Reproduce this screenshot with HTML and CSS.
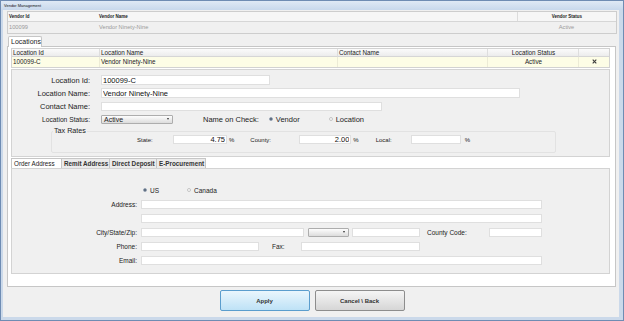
FILE: index.html
```html
<!DOCTYPE html>
<html lang="en">
<head>
    <meta charset="UTF-8">
    <title>Vendor Management</title>
    <link rel="stylesheet" href="styles.css">
</head>
<body>
    <div class="window">
        <div class="titlebar">Vendor Management</div>
        <div class="frame">
            <div class="vendor">
                <div class="vrow vhead">
                    <span class="vid">Vendor Id</span>
                    <span>Vendor Name</span>
                    <span class="vstatus">Vendor Status</span>
                </div>
                <div class="vrow vdata">
                    <span class="vid">100099</span>
                    <span>Vendor Ninety-Nine</span>
                    <span class="vstatus">Active</span>
                </div>
            </div>

            <div class="loc-tab">Locations</div>
            <div class="loc-panel">
                <div class="grid">
                    <div class="gh">Location Id</div>
                    <div class="gh">Location Name</div>
                    <div class="gh">Contact Name</div>
                    <div class="gh center">Location Status</div>
                    <div class="gh"></div>
                    <div class="gd">100099-C</div>
                    <div class="gd">Vendor Ninety-Nine</div>
                    <div class="gd"></div>
                    <div class="gd center">Active</div>
                    <div class="gd center">
                        <svg class="del" width="5" height="5" viewBox="0 0 5 5">
                            <path d="M0.7 0.7 L4.3 4.3 M4.3 0.7 L0.7 4.3" stroke="#3a3a3a" stroke-width="1.1"/>
                        </svg>
                    </div>
                </div>

                <div class="form-panel">
                    <div class="frow">
                        <label class="lbl">Location Id:</label>
                        <input class="in w-id" value="100099-C">
                    </div>
                    <div class="frow">
                        <label class="lbl">Location Name:</label>
                        <input class="in w-name" value="Vendor Ninety-Nine">
                    </div>
                    <div class="frow">
                        <label class="lbl">Contact Name:</label>
                        <input class="in w-contact" value="">
                    </div>
                    <div class="frow">
                        <label class="lbl small">Location Status:</label>
                        <div class="select w-status">Active<span class="arrow"></span></div>
                        <span class="check-lbl">Name on Check:</span>
                        <span class="radio on"></span><span class="rtext">Vendor</span>
                        <span class="radio gap-loc"></span><span class="rtext">Location</span>
                    </div>
                    <fieldset class="tax">
                        <legend>Tax Rates</legend>
                        <div class="trow">
                            <span class="tl t-state">State:</span>
                            <input class="in num w-state" value="4.75">
                            <span class="pct">%</span>
                            <span class="tl t-county">County:</span>
                            <input class="in num w-county" value="2.00">
                            <span class="pct">%</span>
                            <span class="tl t-local">Local:</span>
                            <input class="in num w-local" value="">
                            <span class="pct wide">%</span>
                        </div>
                    </fieldset>
                </div>

                <div class="addr-tabs">
                    <span class="atab on t1">Order Address</span>
                    <span class="atab t2">Remit Address</span>
                    <span class="atab t3">Direct Deposit</span>
                    <span class="atab t4 last">E-Procurement</span>
                </div>
                <div class="addr-panel">
                    <div class="arow">
                        <span class="lbl"></span>
                        <span class="radio on"></span><span class="rtext">US</span>
                        <span class="radio gap-ca"></span><span class="rtext">Canada</span>
                    </div>
                    <div class="arow">
                        <span class="lbl">Address:</span>
                        <input class="in a w-addr">
                    </div>
                    <div class="arow">
                        <span class="lbl"></span>
                        <input class="in a w-addr">
                    </div>
                    <div class="arow">
                        <span class="lbl">City/State/Zip:</span>
                        <input class="in a w-city">
                        <div class="select a w-st"><span class="arrow"></span></div>
                        <input class="in a w-zip">
                        <span class="al w-cclbl">County Code:</span>
                        <input class="in a w-cc">
                    </div>
                    <div class="arow">
                        <span class="lbl">Phone:</span>
                        <input class="in a w-phone">
                        <span class="al w-faxlbl">Fax:</span>
                        <input class="in a w-fax">
                    </div>
                    <div class="arow">
                        <span class="lbl">Email:</span>
                        <input class="in a w-addr">
                    </div>
                </div>
            </div>

            <div class="buttons">
                <button class="btn apply">Apply</button>
                <button class="btn cancel">Cancel \ Back</button>
            </div>
        </div>
    </div>
</body>
</html>
```

FILE: styles.css
```css
* {
    box-sizing: border-box;
}
body {
    margin: 0;
    font-family: "Liberation Sans", Arial, sans-serif;
    color: #222;
}
.window {
    width: 624px;
    height: 321px;
    border: 1px solid #6f8cb3;
    background: #f0f0f0;
    display: flex;
    flex-direction: column;
}
.titlebar {
    height: 9px;
    line-height: 9px;
    padding-left: 3px;
    font-size: 4px;
    color: #111;
    background: linear-gradient(#dfe9f5, #c8d8ec);
}
.frame {
    flex: 1;
    display: flex;
    flex-direction: column;
    border: solid #cbd9ea;
    border-width: 0 4px 3px 2px;
    padding: 1px 2px 0 4px;
}

/* vendor header */
.vendor {
    height: 23px;
    border: 1px solid #cdcdcd;
    background: #f0f0f0;
}
.vrow {
    display: grid;
    grid-template-columns: 91px 418px 1fr;
}
.vhead {
    height: 10px;
    line-height: 9px;
    font-size: 4.5px;
    font-weight: bold;
    background: #f6f6f6;
    border-bottom: 1px solid #d6d6d6;
}
.vhead .vstatus {
    border-left: 1px solid #dcdcdc;
}
.vdata {
    height: 11px;
    line-height: 11px;
    font-size: 5.7px;
    color: #9a9a9a;
}
.vid {
    padding-left: 1px;
}
.vstatus {
    text-align: center;
}

/* locations */
.loc-tab {
    position: relative;
    z-index: 1;
    margin: 2px 0 -1px 1px;
    width: 34px;
    height: 11px;
    background: #fff;
    border: 1px solid #c6c6c6;
    border-bottom: none;
    border-radius: 2px 2px 0 0;
    padding-left: 2px;
    font-size: 7px;
    line-height: 10px;
}
.loc-panel {
    height: 241px;
    margin-right: 1px;
    background: #fff;
    border: 1px solid #c6c6c6;
    padding: 1px 5px 12px 3px;
    display: flex;
    flex-direction: column;
}
.grid {
    display: grid;
    grid-template-columns: 88px 238px 150px 91px 1fr;
    border: 1px solid #d2d2d2;
    font-size: 6.3px;
}
.gh {
    height: 8px;
    line-height: 7px;
    padding-left: 1px;
    background: linear-gradient(#fbfbfb, #ececec);
    border-bottom: 1px solid #d6d6d6;
    border-right: 1px solid #dedede;
}
.gd {
    height: 10px;
    line-height: 10px;
    padding-left: 1px;
    background: #fdfde6;
    border-right: 1px solid #ecebd6;
}
.gh:nth-child(5), .gd:nth-child(10) {
    border-right: none;
}
.center {
    text-align: center;
}
.del {
    vertical-align: middle;
    margin-top: -1px;
}

/* location form */
.form-panel {
    margin-top: 1px;
    height: 88px;
    background: #f0f0f0;
    border: 1px solid #d3d3d3;
    padding-top: 5px;
}
.frow {
    display: flex;
    align-items: center;
    height: 10px;
    margin-bottom: 3px;
    font-size: 7.5px;
}
.lbl {
    width: 78px;
    margin-right: 11px;
    text-align: right;
    flex-shrink: 0;
}
.lbl.small {
    font-size: 6.7px;
}
.in {
    height: 10px;
    border: 1px solid #dfdfdf;
    background: #fff;
    padding: 0 1px;
    font-family: "Liberation Sans", Arial, sans-serif;
    font-size: 7.5px;
    color: #111;
    outline: none;
}
.num {
    text-align: right;
    height: 9px;
}
.w-id { width: 169px; }
.w-name { width: 419px; }
.w-contact { width: 281px; height: 9px; }
.select {
    display: flex;
    align-items: center;
    justify-content: space-between;
    height: 9px;
    border: 1px solid #adadad;
    border-radius: 1px;
    background: linear-gradient(#fdfdfd, #dcdcdc);
    padding: 0 3px 0 2px;
    font-size: 7px;
}
.w-status { width: 72px; }
.arrow {
    width: 0;
    height: 0;
    border-left: 1.5px solid transparent;
    border-right: 1.5px solid transparent;
    border-top: 2px solid #333;
}
.check-lbl {
    margin-left: 30px;
    margin-right: 10px;
}
.radio {
    width: 4px;
    height: 4px;
    border-radius: 50%;
    border: 1px solid #c4c4c4;
    background: #fafafa;
    flex-shrink: 0;
}
.radio.on {
    border-color: #9aa6b6;
    background: #4b5a6e;
}
.rtext {
    margin-left: 3px;
}
.gap-loc { margin-left: 29px; }

.tax {
    margin: 3px 0 0 39px;
    width: 505px;
    border: 1px solid #e2e2e2;
    border-radius: 2px;
    padding: 0 0 8px 0;
    min-width: 0;
}
.tax legend {
    margin-left: 1px;
    padding: 0 1px;
    font-size: 7.2px;
    line-height: 8px;
}
.trow {
    display: flex;
    align-items: center;
    height: 9px;
    font-size: 6px;
}
.tl { flex-shrink: 0; }
.t-state { margin-left: 85px; width: 36px; }
.t-county { margin-left: 16px; width: 49px; }
.t-local { margin-left: 17px; width: 35px; }
.w-state { width: 54px; }
.w-county { width: 52px; }
.w-local { width: 50px; }
.pct {
    margin-left: 2px;
    font-size: 6px;
}
.pct.wide { margin-left: 4px; }

/* address tabs */
.addr-tabs {
    margin-top: 1px;
    display: flex;
    height: 10px;
}
.atab {
    height: 10px;
    line-height: 9px;
    font-size: 6.3px;
    font-weight: bold;
    color: #333;
    padding-left: 2px;
    white-space: nowrap;
    overflow: hidden;
    background: #ebebeb;
    border: 1px solid #c6c6c6;
    border-bottom: none;
    border-right: none;
}
.atab.on {
    background: #fff;
    font-weight: normal;
    color: #222;
}
.atab.last { border-right: 1px solid #c6c6c6; }
.t1 { width: 50px; }
.t2 { width: 48px; }
.t3 { width: 47px; }
.t4 { width: 50px; }

.addr-panel {
    height: 107px;
    background: #f0f0f0;
    border: 1px solid #d3d3d3;
    padding-top: 17px;
}
.arow {
    display: flex;
    align-items: center;
    height: 9px;
    margin-bottom: 5px;
    font-size: 6.5px;
}
.arow .lbl {
    width: 125px;
    margin-right: 4px;
}
.arow .radio { margin-left: 2px; }
.gap-ca { margin-left: 28px !important; }
.in.a { height: 9px; }
.w-addr { width: 401px; }
.w-city { width: 163px; }
.select.a { width: 41px; margin-left: 4px; justify-content: flex-end; }
.w-zip { width: 68px; margin-left: 3px; }
.al { flex-shrink: 0; }
.w-cclbl { margin-left: 7px; width: 62px; }
.w-cc { width: 53px; }
.w-phone { width: 118px; }
.w-faxlbl { margin-left: 13px; width: 29px; }
.w-fax { width: 119px; }

/* buttons */
.buttons {
    margin-top: 3px;
    display: flex;
    justify-content: center;
    gap: 5px;
}
.btn {
    width: 90px;
    height: 21px;
    border-radius: 2px;
    font-family: "Liberation Sans", Arial, sans-serif;
    font-size: 6px;
    font-weight: bold;
    color: #333;
    padding: 0;
}
.btn.apply {
    background: linear-gradient(#eaf6fd, #bee2f6);
    border: 1px solid #5b9dcd;
}
.btn.cancel {
    background: linear-gradient(#f5f5f5, #d6d6d6);
    border: 1px solid #8d8d8d;
}
```
